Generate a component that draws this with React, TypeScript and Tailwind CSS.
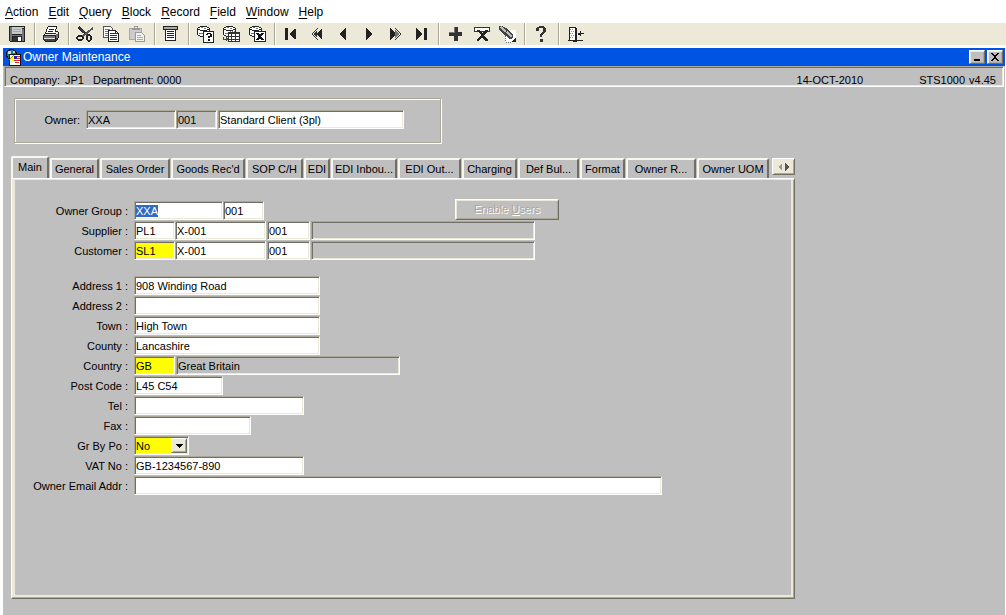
import { useEffect, useRef, type ReactNode } from "react";

const UI_RAISED =
  "border border-t-white border-l-white border-r-[#716f64] border-b-[#716f64] shadow-[inset_1px_1px_#ece9d8,inset_-1px_-1px_#aca899]";
const UI_SUNKEN =
  "border border-t-[#aca899] border-l-[#aca899] border-r-white border-b-white shadow-[inset_1px_1px_#716f64,inset_-1px_-1px_#ece9d8]";
const UI_INPUT = `h-[19px] min-w-0 rounded-none px-px text-[11px] leading-[14px] outline-none ${UI_SUNKEN}`;

const TONES = {
  white: "bg-white",
  yellow: "bg-[#ffff00]",
  gray: "bg-[#bfbfbf]",
};

const MENU = ["Action", "Edit", "Query", "Block", "Record", "Field", "Window", "Help"];

const TABS = [
  { label: "General", width: "w-[49px]" },
  { label: "Sales Order", width: "w-[70px]" },
  { label: "Goods Rec'd", width: "w-[74px]" },
  { label: "SOP C/H", width: "w-[57px]" },
  { label: "EDI", width: "w-[26px]" },
  { label: "EDI Inbou...", width: "w-[66px]" },
  { label: "EDI Out...", width: "w-[63px]" },
  { label: "Charging", width: "w-[55px]" },
  { label: "Def Bul...", width: "w-[61px]" },
  { label: "Format", width: "w-[45px]" },
  { label: "Owner R...", width: "w-[70px]" },
  { label: "Owner UOM", width: "w-[72px]" },
];

function Glyph({ children }: { children: ReactNode }) {
  return (
    <svg width="18" height="18" viewBox="0 0 18 18" shapeRendering="crispEdges" aria-hidden="true">
      {children}
    </svg>
  );
}

// stacked database cylinder shared by the three query icons
function Cylinder() {
  return (
    <>
      <path d="M2 2h2V1h7v1h2v8h-2v1H4v-1H2z" fill="#fff" />
      <path d="M4 1h7v1H4zM2 2h2v1H2zM11 2h2v1h-2zM1 3h1v7H1zM13 3h1v7h-1zM2 4h2v1H2zM4 5h7v1H4zM11 4h2v1h-2zM2 10h2v1H2zM4 11h4v1H4z" fill="#222" />
      <path d="M5 2h2v1H5zM8 3h2v1H8zM8 6h1v1H8zM10 6h1v1h-1zM12 6h1v1h-1zM9 7h1v1H9zM11 7h1v1h-1zM8 8h1v1H8zM10 8h1v1h-1zM3 8h4v1H3zM12 8h1v1h-1z" fill="#777" />
    </>
  );
}

const ICONS: Record<string, ReactNode> = {
  Save: (
    <>
      <path d="M1 1h16v16H2l-1-1z" fill="#222" />
      <path d="M2 2h2v14H2zM14 4h2v12h-2zM4 10h10v1H4z" fill="#777" />
      <path d="M4 2h10v7H4zM14 2h2v1h-2z" fill="#c8c8c8" />
      <path d="M5 4h8v1H5zM5 6h8v1H5z" fill="#aaa" />
      <path d="M5 12h8v4H5z" fill="#333" />
      <path d="M10 12h3v4h-3z" fill="#fff" />
    </>
  ),
  Print: (
    <>
      <path d="M6 2h9l-3 7H3z" fill="#fff" />
      <path d="M6 1h9v1H6zM5 2h1v2H5zM14 2h1v2h-1zM4 4h1v3H4zM13 4h1v3h-1zM7 4h5v1H7zM6 6h5v1H6zM3 7h1v1H3zM3 8h11v1H3zM14 6h2v1h-2zM2 9h1v1H2zM1 10h13v1H1zM16 7h1v6h-1zM1 11h1v4H1zM13 10h1v6h-1zM2 15h1v1H2zM3 16h11v1H3zM14 15h1v1h-1zM15 13h1v2h-1z" fill="#222" />
      <path d="M2 11h11v2H2zM14 9h2v4h-2z" fill="#777" />
      <path d="M2 13h11v1H2z" fill="#ddd" />
      <path d="M2 14h11v2H3zM14 13h1v2h-1z" fill="#444" />
    </>
  ),
  Cut: (
    <>
      <path d="M3 2l9 9M2 3l10 8" stroke="#333" strokeWidth="1.6" fill="none" />
      <path d="M17 3L6 12" stroke="#555" strokeWidth="2" fill="none" />
      <ellipse cx="4" cy="13" rx="3" ry="2" fill="none" stroke="#222" strokeWidth="1.5" />
      <ellipse cx="13" cy="13" rx="2" ry="3" fill="none" stroke="#222" strokeWidth="1.5" />
    </>
  ),
  Copy: (
    <>
      <path d="M1.5 1.5h7l2 2v9h-9z" fill="#fff" stroke="#555" />
      <path d="M3 4h5M3 6.500h6M3 8.500h6M3 10.500h6" stroke="#777" />
      <path d="M6.500 5.500h7l3 3v8h-10z" fill="#fff" stroke="#222" />
      <path d="M8 8.500h5M8 10.500h7M8 12.500h7M8 14.500h7M13.500 6v2.500H16" stroke="#333" fill="none" />
    </>
  ),
  Paste: (
    <>
      <path d="M1 3h13v12H1z" fill="#aaa" />
      <path d="M2 4h11v10H2z" fill="#ccc" />
      <path d="M6 1h4v2h2v2H4V3h2z" fill="#999" />
      <path d="M7 2h2v1H7z" fill="#eee" />
      <path d="M7.500 7.500h6l3 3v6h-9z" fill="#f4f4ee" stroke="#999" />
      <path d="M9 10.500h4M9 12.500h6M9 14.500h6" stroke="#aaa" />
    </>
  ),
  List: (
    <>
      <path d="M1 1h15v4H1z" fill="#222" />
      <path d="M2 2h13v2H2z" fill="#aaa" />
      <path d="M3 5h11v11H3z" fill="#222" />
      <path d="M4 5h9v10H4z" fill="#fff" />
      <path d="M5 6h7v1H5zM5 8h7v1H5zM5 10h7v1H5zM5 12h7v1H5z" fill="#222" />
    </>
  ),
  "Enter Query": (
    <>
      <Cylinder />
      <path d="M7.500 6.500h10v11h-10z" fill="#fff" stroke="#222" />
      <path d="M10 9h1V8h4v1h1v3h-2v1h-2v-2h2V9h-2v1h-2zM12 14h2v2h-2z" fill="#111" />
    </>
  ),
  "Execute Query": (
    <>
      <Cylinder />
      <path d="M6 7h12v10H6z" fill="#fff" />
      <path d="M6 7h12v2H6zM6 11h12v1H6zM6 14h12v1H6zM6 16h12v1H6zM6 7h1v10H6zM9 7h1v10H9zM13 7h1v10h-1zM17 7h1v10h-1z" fill="#333" />
      <path d="M1 12h1v2h2v-2l2 2-2 3v-2H1z" fill="#444" />
    </>
  ),
  "Cancel Query": (
    <>
      <Cylinder />
      <path d="M6.500 6.500h11v10h-11z" fill="#fff" stroke="#222" />
      <path d="M8 8h3l1 2 1-2h3l-2.500 3.500L16 15h-3l-1-2-1 2H8l2.500-3.500z" fill="#111" />
    </>
  ),
  First: <path d="M3 3h3v12H3zM14 3v12l-1-1-6-5 6-5z" fill="#222" />,
  "Previous Block": (
    <>
      <path d="M9 3v12L3 9z" fill="#333" />
      <path d="M10 3L4 9l6 6h1L5 9l6-6z" fill="#ece9d8" />
      <path d="M14 3v12L8 9z" fill="#222" />
      <path d="M9 3h1L4 9l6 6H9L3 9z" fill="#333" />
    </>
  ),
  Previous: <path d="M12 3v12L5 9z" fill="#222" />,
  Next: <path d="M6 3v12l7-6z" fill="#222" />,
  "Next Block": (
    <>
      <path d="M4 3v12l6-6z" fill="#222" />
      <path d="M8 3h1l6 6-6 6H8l6-6z" fill="#333" />
      <path d="M9 5v8l4-4z" fill="#777" />
    </>
  ),
  Last: <path d="M4 3v12l1-1 6-5-6-5zM12 3h3v12h-3z" fill="#222" />,
  Insert: (
    <>
      <path d="M8 2h4v5h4v4h-4v5H8v-5H3V7h5z" fill="#333" />
      <path d="M8 2h1v6H3V7h5z" fill="#777" />
    </>
  ),
  Delete: (
    <>
      <path d="M2.500 2.500h15v4h-15z" fill="#fff" stroke="#333" />
      <path d="M5 5h3l2 3 3-3h3v1l-4 4 4 5v1h-3l-3-4-3 4H5v-1l4-5-4-4z" fill="#222" />
    </>
  ),
  Clear: (
    <>
      <path d="M7 5h11v12H7z" fill="#fff" />
      <path d="M7.500 9v8h6" stroke="#777" strokeDasharray="1 1" fill="none" />
      <path d="M1 1h3l4 2 7 7v3l-3 1-8-6-3-4z" fill="#444" />
      <path d="M3 2l5 5M9 7l5 5" stroke="#bbb" strokeWidth="2" />
      <path d="M18 12v5h-5z" fill="#222" />
    </>
  ),
  Help: (
    <path d="M4 3h1V2h2V1h5v1h1v1h1v4h-1v1h-1v1h-1v1h-1v2H8V9h1V8h1V7h1V3H7v3H4zM8 14h3v3H8z" fill="#333" />
  ),
  Exit: (
    <>
      <path d="M3 2h8v13H3z" fill="#fff" />
      <path d="M3 2h7v1H3zM3 2h1v13H3zM2 15h5v1H2zM9 3h2v14H9zM7 15h2v2H7zM11 15h6v1h-6zM14 6h1v2h3v1h-3v2h-1v-1h-2V8h2z" fill="#222" />
      <path d="M4 4h1v1H4zM6 4h1v1H6zM5 6h1v1H5zM7 6h1v1H7zM4 8h1v1H4zM6 8h1v1H6zM5 10h1v1H5zM7 10h1v1H7zM4 12h1v1H4zM6 12h1v1H6z" fill="#888" />
    </>
  ),
};

const TOOLBAR = [
  ["Save"],
  ["Print"],
  ["Cut", "Copy", "Paste"],
  ["List"],
  ["Enter Query", "Execute Query", "Cancel Query"],
  ["First", "Previous Block", "Previous", "Next", "Next Block", "Last"],
  ["Insert", "Delete", "Clear"],
  ["Help"],
  ["Exit"],
];

function MenuBar() {
  return (
    <nav className="flex h-[23px] items-center gap-2.5 bg-white pl-[5px] text-[12px]">
      {MENU.map((item) => (
        <button key={item} type="button">
          <span className="underline underline-offset-2">{item[0]}</span>
          {item.slice(1)}
        </button>
      ))}
    </nav>
  );
}

function Toolbar() {
  return (
    <div className="flex h-[22px] items-center bg-[#ece9d8] pl-1">
      {TOOLBAR.map((group, i) => (
        <div key={group[0]} className="flex items-center">
          {i > 0 && (
            <div className="mr-0.5 ml-1 h-[22px] w-0.5 border-l border-[#aca899] bg-white" />
          )}
          {group.map((name) => (
            <button key={name} type="button" aria-label={name} className="flex w-[26px] justify-center">
              <Glyph>{ICONS[name]}</Glyph>
            </button>
          ))}
        </div>
      ))}
    </div>
  );
}

function TitleBar() {
  return (
    <header className="flex h-[18px] items-center bg-[#0054e3] pr-0.5 pl-[3px] text-white">
      <svg width="17" height="17" viewBox="0 0 17 17" shapeRendering="crispEdges" aria-hidden="true">
        <circle cx="5.500" cy="5.500" r="5" fill="#157a8a" stroke="#111" />
        <path d="M2 2h3v3H2zM7 2h2v2H7z" fill="#c8d8d8" />
        <path d="M3.500 5.500h11v11h-11z" fill="#fff" stroke="#111" />
        <path d="M11 7h3v1h-3zM11 9h3v1h-3zM8 11h6v1H8zM9 13h4v1H9z" fill="#d22" />
        <path d="M8 7h3v3H8z" fill="#22b" />
        <path d="M8 6L4 11h2l-2 5 5-6H7l2-4z" fill="#ff0" />
        <path d="M7 6L3 11h1l4-5z" fill="#a80" />
      </svg>
      <h1 className="text-[12px] leading-[18px]">Owner Maintenance</h1>
      <div className="ml-auto flex gap-0.5">
        <button
          type="button"
          aria-label="Minimize"
          className={`flex h-[14px] w-4 items-center justify-center bg-[#bfbfbf] ${UI_RAISED}`}
        >
          <svg width="10" height="10" viewBox="0 0 10 10" shapeRendering="crispEdges">
            <path d="M2 7h6v2H2z" fill="#000" />
          </svg>
        </button>
        <button
          type="button"
          aria-label="Close"
          className={`flex h-[14px] w-4 items-center justify-center bg-[#bfbfbf] ${UI_RAISED}`}
        >
          <svg width="10" height="10" viewBox="0 0 10 10" shapeRendering="crispEdges">
            <path d="M1 1h2v1h1v1h2V2h1V1h2v1H8v1H7v1H6v2h1v1h1v1h1v1H7V8H6V7H4v1H3v1H1V8h1V7h1V6h1V4H3V3H2V2H1z" fill="#000" />
          </svg>
        </button>
      </div>
    </header>
  );
}

function StatusLine() {
  return (
    <div
      className={`mx-px flex h-[21px] items-end overflow-hidden pr-[7px] pl-[5px] leading-3 ${UI_SUNKEN}`}
    >
      <span className="w-[55px]">Company:</span>
      <span className="w-[28px]">JP1</span>
      <span className="w-[64px]">Department:</span>
      <span>0000</span>
      <span className="ml-auto">14-OCT-2010</span>
      <span className="ml-14">STS1000</span>
      <span className="ml-1">v4.45</span>
    </div>
  );
}

type FieldProps = {
  label: string;
  value?: string;
  width: string;
  tone?: keyof typeof TONES;
  id?: string;
};

function Field({ label, value = "", width, tone = "white", id }: FieldProps) {
  return (
    <input
      id={id}
      aria-label={id ? undefined : label}
      defaultValue={value}
      readOnly={tone === "gray"}
      className={`${UI_INPUT} ${TONES[tone]} ${width}`}
    />
  );
}

function Row({ label, id, children }: { label: string; id: string; children: ReactNode }) {
  return (
    <div className="flex h-5 items-start">
      <label
        htmlFor={id}
        className="mr-1.5 w-[113px] shrink-0 self-center pt-px text-right whitespace-nowrap"
      >
        {label} :
      </label>
      {children}
    </div>
  );
}

function TabStrip() {
  const tab =
    "shrink-0 rounded-t-[2px] border-2 border-b-0 border-t-[#f8f7ee] border-l-[#f8f7ee] border-r-[#716f64] bg-[#bfbfbf] whitespace-nowrap";
  return (
    <div role="tablist" className="flex items-end gap-px">
      <button type="button" role="tab" aria-selected="true" className={`h-[22px] w-[38px] pb-px ${tab}`}>
        Main
      </button>
      {TABS.map((t) => (
        <button key={t.label} type="button" role="tab" aria-selected="false" className={`h-5 ${t.width} ${tab}`}>
          {t.label}
        </button>
      ))}
      <button
        type="button"
        aria-label="Scroll tabs"
        className={`mb-[3px] ml-auto flex h-[17px] w-[23px] shrink-0 items-center justify-center bg-[#ece9d8] ${UI_RAISED}`}
      >
        <svg width="12" height="8" viewBox="0 0 12 8" shapeRendering="crispEdges">
          <path d="M4 0v8L0 4z" fill="#999" />
          <path d="M7 0v8l4-4z" fill="#555" />
        </svg>
      </button>
    </div>
  );
}

function MainPanel() {
  const ownerGroup = useRef<HTMLInputElement>(null);

  useEffect(() => {
    ownerGroup.current?.focus();
    ownerGroup.current?.select();
  }, []);

  return (
    <div
      role="tabpanel"
      className="flex-1 border-t border-r border-b border-l border-t-white border-r-[#716f64] border-b-[#716f64] border-l-white pt-[22px] pb-4 pl-[3px] shadow-[inset_0_1px_#ece9d8,inset_-1px_-1px_#aca899,inset_3px_0_#ece9d8,inset_-3px_-3px_#ece9d8]"
    >
      <Row label="Owner Group" id="owner-group">
        <input
          id="owner-group"
          ref={ownerGroup}
          defaultValue="XXA"
          className={`${UI_INPUT} w-[89px] bg-white selection:bg-[#316ac5] selection:text-white`}
        />
        <Field label="Owner group number" value="001" width="w-[41px]" />
        <button
          type="button"
          disabled
          className={`ml-[191px] -mt-0.5 h-[21px] w-[104px] shrink-0 text-[#aca899] [text-shadow:1px_1px_#fff] ${UI_RAISED}`}
        >
          Enable <span className="underline">U</span>sers
        </button>
      </Row>
      <Row label="Supplier" id="supplier">
        <Field id="supplier" label="Supplier" value="PL1" width="w-[41px]" />
        <Field label="Supplier code" value="X-001" width="w-[91px]" />
        <Field label="Supplier number" value="001" width="ml-px w-[43px]" />
        <Field label="Supplier name" width="ml-px w-[224px]" tone="gray" />
      </Row>
      <Row label="Customer" id="customer">
        <Field id="customer" label="Customer" value="SL1" width="w-[41px]" tone="yellow" />
        <Field label="Customer code" value="X-001" width="w-[91px]" />
        <Field label="Customer number" value="001" width="ml-px w-[43px]" />
        <Field label="Customer name" width="ml-px w-[224px]" tone="gray" />
      </Row>
      <div className="mt-[15px]">
        <Row label="Address 1" id="address1">
          <Field id="address1" label="Address 1" value="908 Winding Road" width="w-[186px]" />
        </Row>
        <Row label="Address 2" id="address2">
          <Field id="address2" label="Address 2" width="w-[186px]" />
        </Row>
        <Row label="Town" id="town">
          <Field id="town" label="Town" value="High Town" width="w-[186px]" />
        </Row>
        <Row label="County" id="county">
          <Field id="county" label="County" value="Lancashire" width="w-[186px]" />
        </Row>
        <Row label="Country" id="country">
          <Field id="country" label="Country" value="GB" width="w-[41px]" tone="yellow" />
          <Field label="Country name" value="Great Britain" width="ml-px w-[224px]" tone="gray" />
        </Row>
        <Row label="Post Code" id="postcode">
          <Field id="postcode" label="Post Code" value="L45 C54" width="w-[89px]" />
        </Row>
        <Row label="Tel" id="tel">
          <Field id="tel" label="Tel" width="w-[170px]" />
        </Row>
        <Row label="Fax" id="fax">
          <Field id="fax" label="Fax" width="w-[117px]" />
        </Row>
        <Row label="Gr By Po" id="gr-by-po">
          <div className="relative flex">
            <select id="gr-by-po" className={`${UI_INPUT} w-[55px] appearance-none bg-[#ffff00]`}>
              <option>No</option>
              <option>Yes</option>
            </select>
            <span
              className={`pointer-events-none absolute top-0.5 right-0.5 flex h-[15px] w-4 items-center justify-center bg-[#ece9d8] ${UI_RAISED}`}
            >
              <svg width="7" height="4" viewBox="0 0 7 4" shapeRendering="crispEdges">
                <path d="M0 0h7v1H6v1H5v1H4v1H3V3H2V2H1V1H0z" fill="#000" />
              </svg>
            </span>
          </div>
        </Row>
        <Row label="VAT No" id="vat">
          <Field id="vat" label="VAT No" value="GB-1234567-890" width="w-[170px]" />
        </Row>
        <Row label="Owner Email Addr" id="email">
          <Field id="email" label="Owner Email Addr" width="w-[528px]" />
        </Row>
      </div>
    </div>
  );
}

export default function App() {
  return (
    <div className="flex min-h-screen flex-col bg-white font-['Liberation_Sans',Arial,sans-serif] text-[11px] text-black">
      <MenuBar />
      <Toolbar />
      <main className="mt-[3px] mr-px ml-[3px] flex flex-1 flex-col bg-[#bfbfbf]">
        <TitleBar />
        <StatusLine />
        <div className="flex flex-1 flex-col pt-[11px] pb-4">
          <section className="ml-[11px] flex h-[45px] w-[427px] items-start border border-[#aca899] pt-[11px] shadow-[inset_1px_1px_#fff,1px_1px_#fff]">
            <label htmlFor="owner" className="mr-1.5 w-[65px] pt-0.5 text-right">
              Owner:
            </label>
            <Field id="owner" label="Owner" value="XXA" width="w-[90px]" tone="gray" />
            <Field label="Owner number" value="001" width="w-[41px]" tone="gray" />
            <Field label="Owner name" value="Standard Client (3pl)" width="ml-px w-[186px]" />
          </section>
          <div className="mt-[13px] mr-[210px] ml-2 flex flex-1 flex-col">
            <TabStrip />
            <MainPanel />
          </div>
        </div>
      </main>
    </div>
  );
}
